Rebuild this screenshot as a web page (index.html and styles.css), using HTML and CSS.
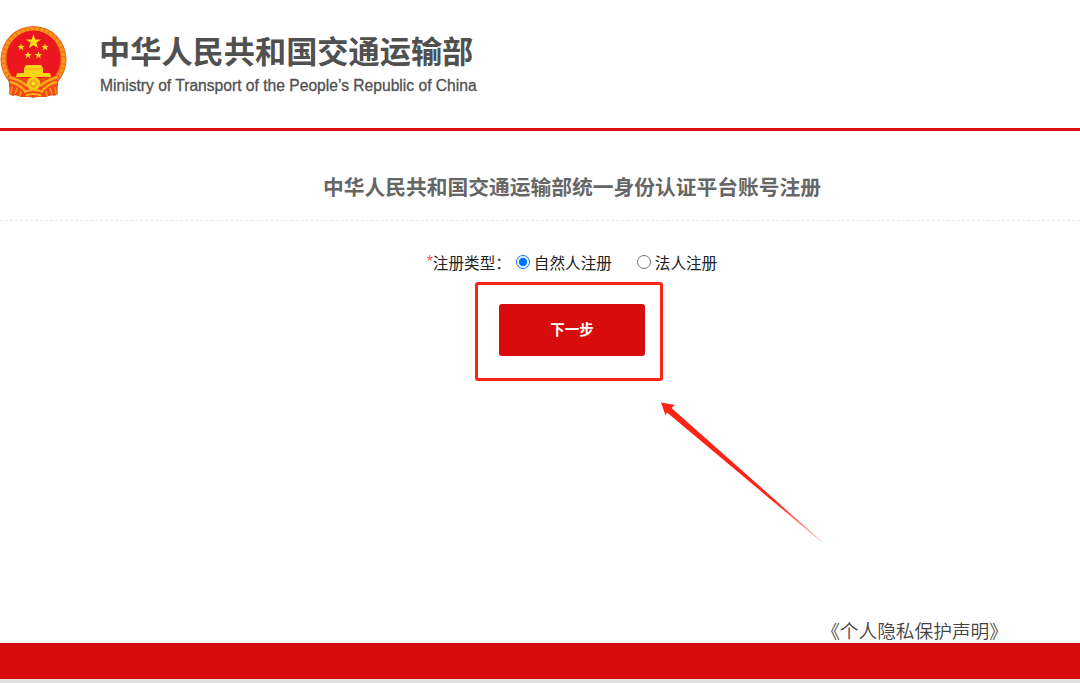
FILE: index.html
```
<!DOCTYPE html>
<html lang="zh-CN">
<head>
    <meta charset="UTF-8">
    <meta name="viewport" content="width=device-width, initial-scale=1.0">
    <title>账号注册</title>
    <link rel="stylesheet" href="styles.css">
</head>
<body>
    <header class="header">
        <svg class="emblem" viewBox="0 0 68 74" width="68" height="74">
            <path d="M12 50 L9 69 L13 71 L17 69 L21 72 L27 71 L33 73 L40 71 L46 72 L50 69 L54 71 L58 69 L55 50 Z" fill="#f04a14"/>
            <ellipse cx="33.5" cy="34.5" rx="33" ry="33.5" fill="#f0601a"/>
            <ellipse cx="33.5" cy="34.5" rx="30" ry="30.5" fill="none" stroke="#f9951a" stroke-width="4" stroke-dasharray="4 .8"/>
            <ellipse cx="33.5" cy="33.5" rx="27" ry="28" fill="#ec1620"/>
            <path id="star" d="M33.5 9 L35.3 14.4 H41 L36.4 17.7 L38.1 23.2 L33.5 19.9 L28.9 23.2 L30.6 17.7 L26 14.4 H31.7 Z" fill="#ffe01b"/>
            <use href="#star" transform="translate(4.3 13.8) scale(.5)"/>
            <use href="#star" transform="translate(28.3 13.8) scale(.5)"/>
            <use href="#star" transform="translate(11.3 21.8) scale(.5)"/>
            <use href="#star" transform="translate(21.7 21.8) scale(.5)"/>
            <path d="M8 50 Q33 57 59 50 L57 69 L45 72 H22 L10 69 Z" fill="#f04a14"/>
            <path d="M26 40 H41 L43 43.5 V48 H50 L51 52 H16 L17 48 H24 V43.5 Z" fill="#fcd51a"/>
            <path d="M25 44 H42" stroke="#f5a019" stroke-width="1"/>
            <path d="M9 52 Q20 55 27 61 M58 52 Q47 55 40 61 M10 57 Q19 59 25 66 M57 57 Q48 59 42 66" fill="none" stroke="#fba81a" stroke-width="2.4"/>
            <path d="M12 62 L11 69 M17 63 L15 69 M21 66 L20 71 M55 62 L56 69 M50 63 L52 69 M46 66 L47 71" fill="none" stroke="#f79a1a" stroke-width="1.6"/>
            <circle cx="33.5" cy="58.5" r="5.5" fill="#f6a81a" stroke="#fccc1b" stroke-width="2.5"/>
            <circle cx="33.5" cy="58.5" r="1.8" fill="#fde02a"/>
            <path d="M24 67 Q33.5 63 43 67 M26 70.5 Q33.5 67.5 41 70.5" fill="none" stroke="#fbb51b" stroke-width="2"/>
        </svg>
        <div class="brand">
            <div class="brand-cn">中华人民共和国交通运输部</div>
            <div class="brand-en">Ministry of Transport of the People’s Republic of China</div>
        </div>
    </header>

    <main class="main">
        <h1 class="title">中华人民共和国交通运输部统一身份认证平台账号注册</h1>
        <form class="form">
            <div class="type-row">
                <span class="star">*</span><span class="type-label">注册类型：</span>
                <label class="option"><input type="radio" name="type" checked>自然人注册</label>
                <label class="option"><input type="radio" name="type">法人注册</label>
            </div>
            <div class="next">
                <button type="button" class="next-btn">下一步</button>
                <div class="mark"></div>
                <svg class="arrow" viewBox="0 0 164 142" width="164" height="142">
                    <defs>
                        <linearGradient id="fade" x1="0" y1="0" x2="1" y2="1">
                            <stop offset=".7" stop-color="#ff2315"/>
                            <stop offset="1" stop-color="#ff2315" stop-opacity=".3"/>
                        </linearGradient>
                    </defs>
                    <path d="M0 0.5 L14 3 L10.5 6 L161.5 140 L160.5 140 L6 10.5 L4.5 13.5 Z" fill="url(#fade)"/>
                </svg>
            </div>
        </form>
    </main>

    <div class="privacy"><a class="privacy-link" href="#">《个人隐私保护声明》</a></div>
    <footer class="footer"></footer>
</body>
</html>
```

FILE: styles.css
```
* {
    box-sizing: border-box;
}
body {
    margin: 0;
    height: 683px;
    display: flex;
    flex-direction: column;
    overflow: hidden;
    background: #fff;
    font-family: "Noto Sans CJK SC", sans-serif;
    color: #222;
}
.header {
    display: flex;
    flex: none;
    height: 131px;
    padding-top: 25px;
    border-bottom: 3px solid #dc0d10;
}
.emblem {
    flex: none;
}
.brand {
    margin-left: 31px;
    padding-top: 5px;
    color: #505050;
    white-space: nowrap;
}
.brand-cn {
    font-size: 31.2px;
    line-height: 40px;
    font-weight: bold;
}
.brand-en {
    margin-top: 6px;
    margin-left: 1px;
    font-family: "Liberation Sans", Arial, sans-serif;
    font-size: 15.63px;
    line-height: 20px;
    -webkit-text-stroke: 0.3px #505050;
}
.main {
    flex: 1;
}
.title {
    margin: 0;
    height: 90px;
    padding-top: 40px;
    padding-left: 64px;
    border-bottom: 1px dashed #e6e6e6;
    font-size: 20.75px;
    line-height: 30px;
    text-align: center;
    color: #666;
}
.form {
    display: flex;
    flex-direction: column;
    align-items: center;
    padding-left: 64px;
}
.type-row {
    display: flex;
    align-items: center;
    height: 24px;
    margin-top: 29px;
    font-size: 15.6px;
}
.star {
    color: #ff5543;
    font-family: "Liberation Sans", sans-serif;
}
.option {
    display: flex;
    align-items: center;
    margin-right: 25px;
}
.option:last-child {
    margin-right: 0;
}
.option input {
    width: 14px;
    height: 14px;
    margin: 0 4px 0 5px;
}
.option + .option input {
    margin-left: 0;
}
.next {
    position: relative;
    margin-top: 30px;
}
.next-btn {
    display: block;
    width: 146px;
    height: 52px;
    padding: 0 0 3px;
    border: none;
    border-radius: 3px;
    background: #d90c0d;
    color: #fff;
    font-family: inherit;
    font-size: 14.5px;
    font-weight: bold;
}
/* highlight frame and pointer over the button */
.mark {
    position: absolute;
    left: -24px;
    top: -22px;
    width: 188px;
    height: 99px;
    border: 3px solid #ff2315;
    border-radius: 3px;
}
.arrow {
    position: absolute;
    left: 162px;
    top: 98px;
}
.privacy {
    flex: none;
    padding-right: 72px;
    padding-bottom: 1px;
    text-align: right;
}
.privacy-link {
    display: block;
    font-size: 18.7px;
    line-height: 24px;
    font-weight: 350;
    color: #444;
    text-decoration: none;
}
.footer {
    flex: none;
    height: 40px;
    background: #d90c0d;
    border-bottom: 4px solid #e0e0e0;
}
```
